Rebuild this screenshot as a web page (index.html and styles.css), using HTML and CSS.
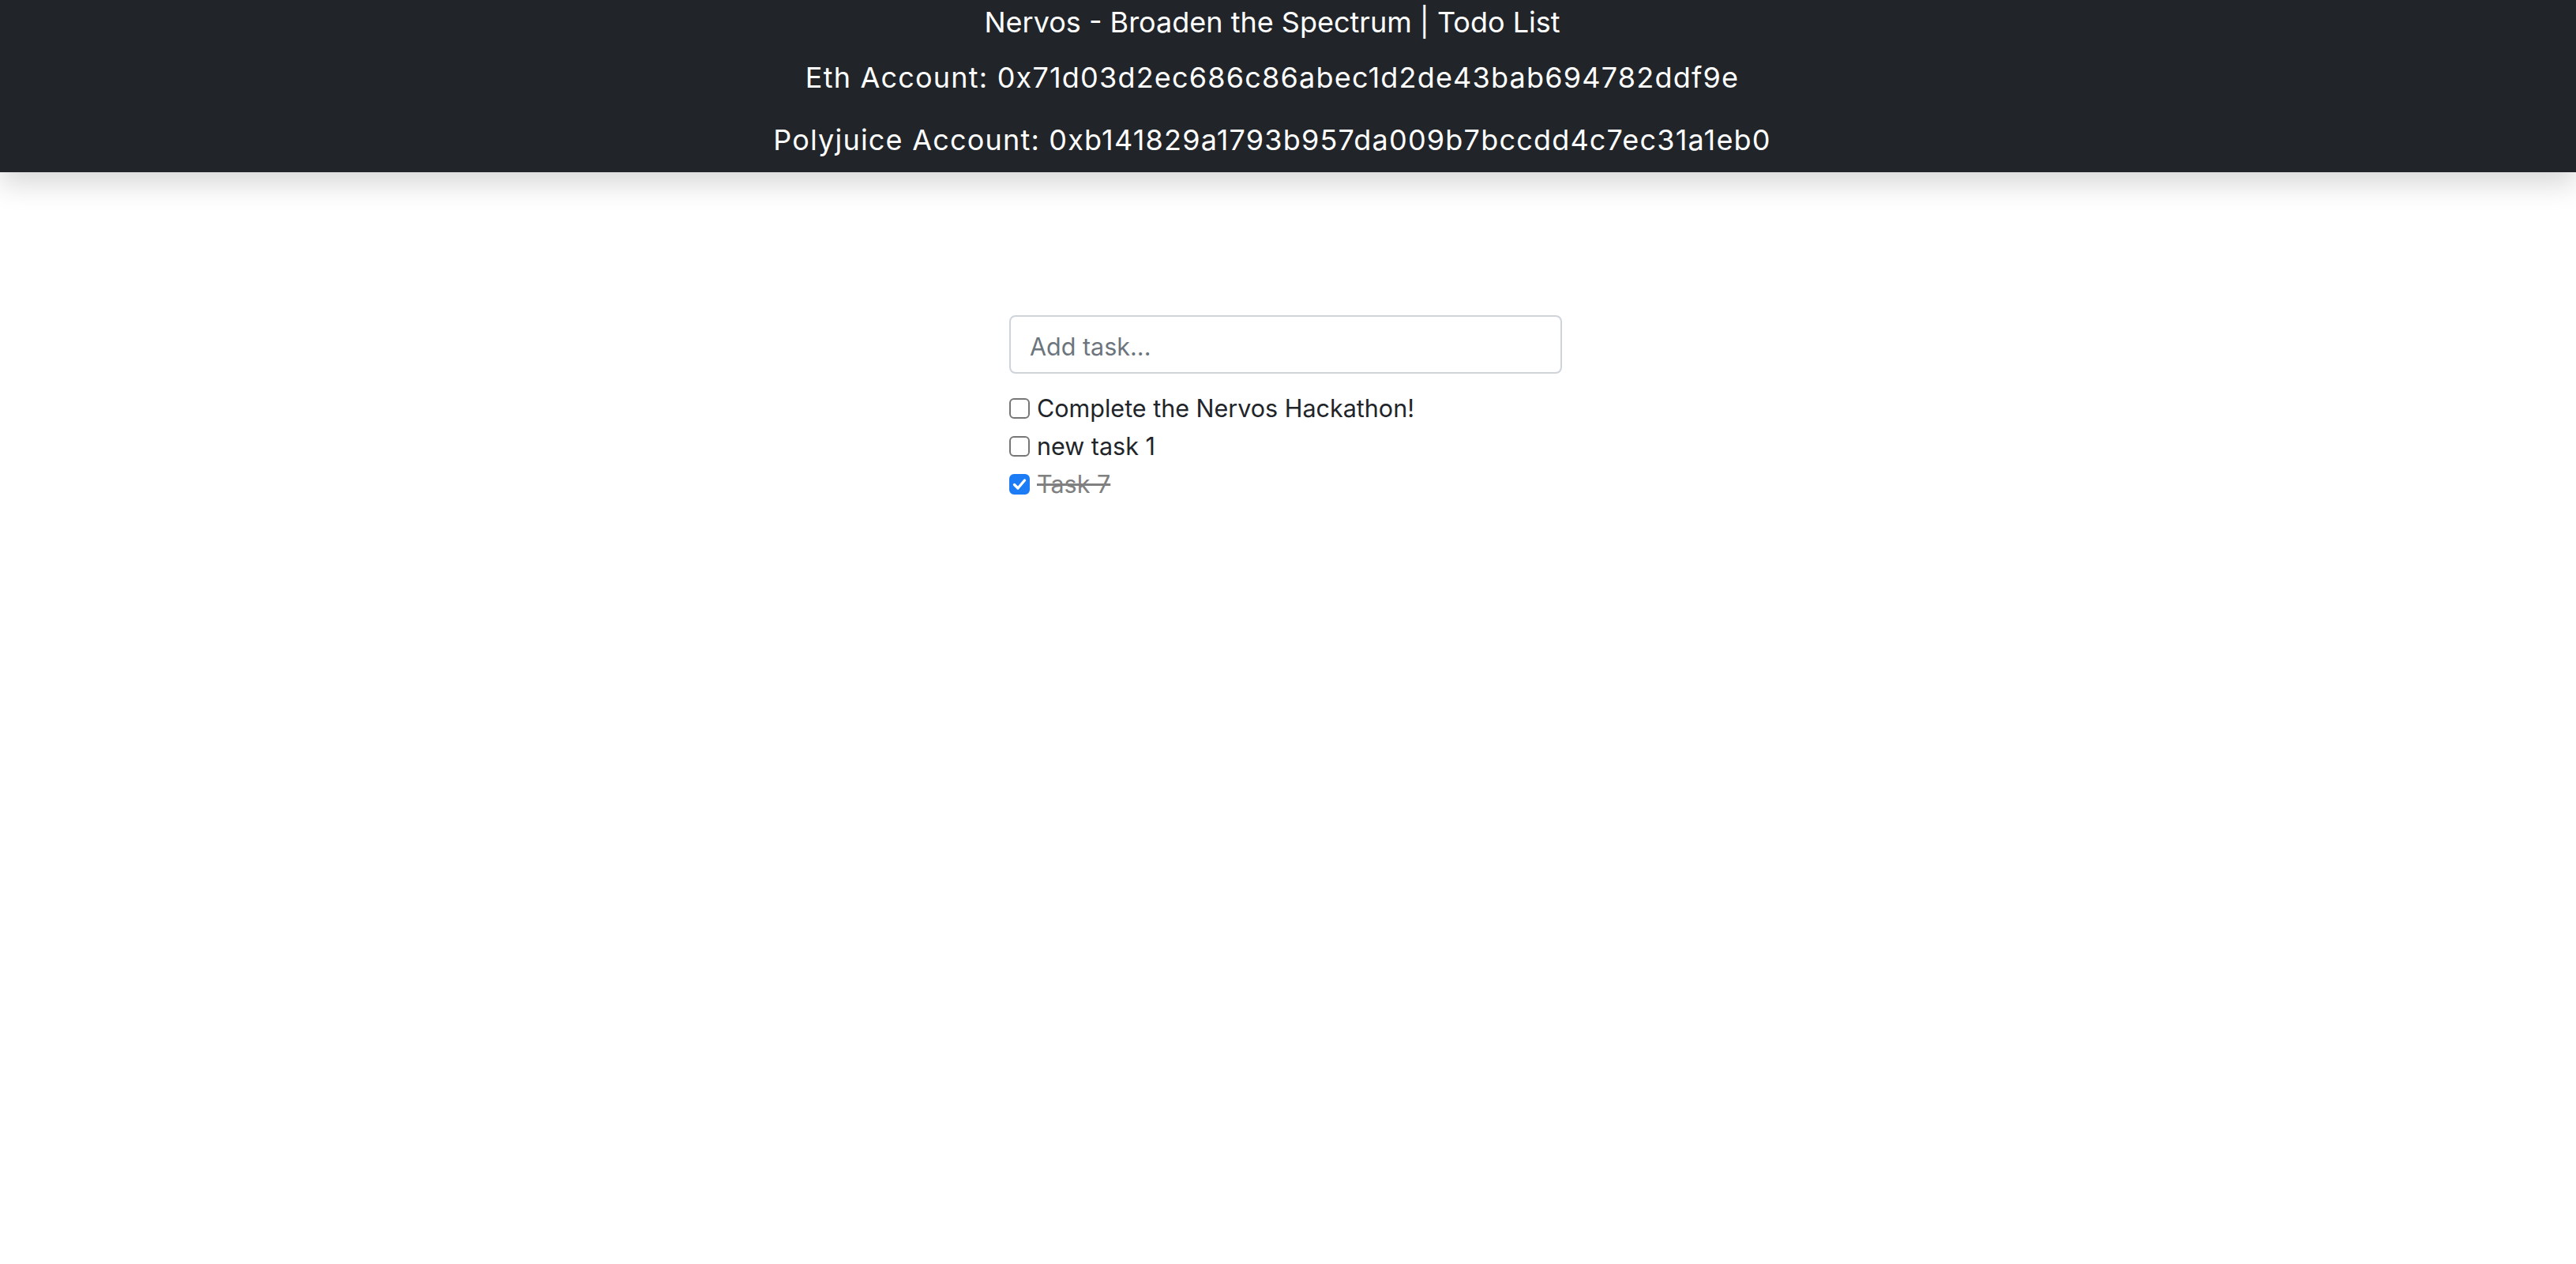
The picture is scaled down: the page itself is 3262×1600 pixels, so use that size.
FILE: index.html
```html
<!DOCTYPE html>
<html lang="en">
<head>
<meta charset="utf-8">
<title>Nervos Todo List</title>
<link rel="stylesheet" href="styles.css">
</head>
<body>
<header class="topbar">
  <div class="title">Nervos - Broaden the Spectrum | Todo List</div>
  <div class="account account-eth">Eth Account: 0x71d03d2ec686c86abec1d2de43bab694782ddf9e</div>
  <div class="account account-poly">Polyjuice Account: 0xb141829a1793b957da009b7bccdd4c7ec31a1eb0</div>
</header>
<main class="todo">
  <input class="task-input" type="text" placeholder="Add task...">
  <ul class="tasks">
    <li class="task"><span class="box"></span><span class="label">Complete the Nervos Hackathon!</span></li>
    <li class="task"><span class="box"></span><span class="label">new task 1</span></li>
    <li class="task done"><span class="box checked"><svg viewBox="0 0 26 26" width="26" height="26"><path d="M6.5 13.5 L11 18 L19.5 8" fill="none" stroke="#fff" stroke-width="3.4" stroke-linecap="round" stroke-linejoin="round"/></svg></span><span class="label">Task 7</span></li>
  </ul>
</main>
</body>
</html>
```
FILE: styles.css
```css
html, body {
  margin: 0;
  padding: 0;
  background: #fff;
}
body {
  font-family: Inter, "Noto Sans", "Liberation Sans", sans-serif;
  color: #212529;
  font-size: 30.5px;
  line-height: 1.5;
}
.topbar {
  background: #212529;
  color: #fff;
  text-align: center;
  padding: 0 40px 17px 0;
  box-shadow: 0 16px 32px rgba(0, 0, 0, 0.15);
}
.title {
  font-size: 36px;
  line-height: 56px;
}
.account {
  font-size: 36px;
  line-height: 48px;
  letter-spacing: 1.2px;
}
.account-eth {
  margin-top: 18px;
}
.account-poly {
  margin-top: 31px;
}
.todo {
  box-sizing: border-box;
  width: 706px;
  padding-right: 6px;
  margin: 181px auto 0;
}
.task-input {
  display: block;
  box-sizing: border-box;
  width: 100%;
  height: 74px;
  padding: 4px 24px 0;
  border: 2px solid #ced4da;
  border-radius: 8px;
  font-family: inherit;
  font-size: 30.5px;
  color: #495057;
  outline: none;
}
.task-input::placeholder {
  color: #6c757d;
}
.tasks {
  list-style: none;
  margin: 20px 0 0;
  padding: 0;
}
.task {
  display: flex;
  align-items: center;
  height: 48px;
}
.box {
  box-sizing: border-box;
  width: 26px;
  height: 26px;
  border: 2px solid #767676;
  border-radius: 6px;
  margin-right: 9px;
  flex: none;
  display: flex;
}
.box.checked {
  background: #1b7cf6;
  border-color: #1b7cf6;
}
.box.checked svg {
  margin: -2px;
}
.done .label {
  color: #808080;
  text-decoration: line-through;
}
```
